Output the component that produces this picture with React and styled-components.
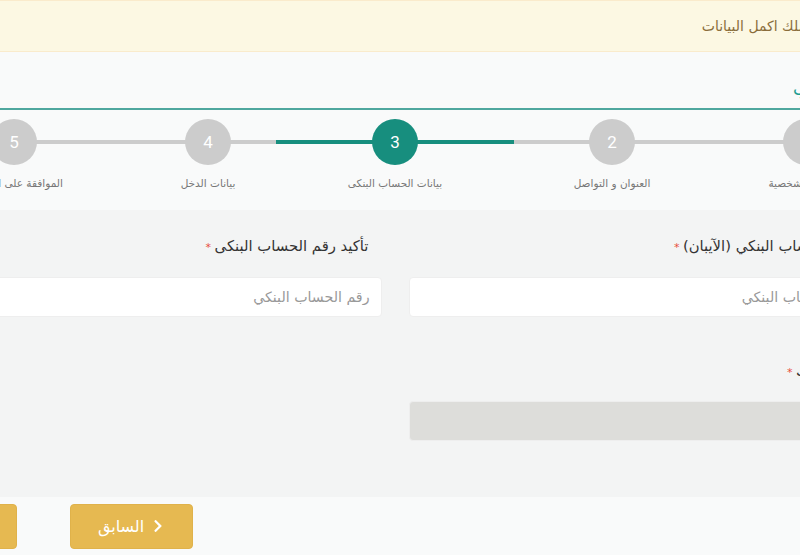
import React from 'react';
import styled, { createGlobalStyle } from 'styled-components';
import { FaChevronRight } from 'react-icons/fa';

const GlobalStyle = createGlobalStyle`
  html, body {
    margin: 0;
    padding: 0;
  }
  body {
    background: #f9fafa;
    font-family: "DejaVu Sans", "Noto Sans", sans-serif;
    overflow: hidden;
  }
  * {
    box-sizing: border-box;
  }
`;

// Окно просмотра
const Viewport = styled.div`
  width: 800px;
  height: 555px;
  overflow: hidden;
  background: #f9fafa;
`;

// Страница шире окна, центрирована около x=395
const Frame = styled.div`
  direction: rtl;
  width: 970px;
  margin-left: -90px;
`;

const Alert = styled.div`
  height: 52px;
  display: flex;
  align-items: center;
  padding: 0 40px;
  background: #fcf8e3;
  border-top: 1px solid #faebcc;
  border-bottom: 1px solid #faebcc;
  color: #8a6d3b;
  font-size: 14px;
`;

const Head = styled.section`
  padding-top: 22px;
`;

const Title = styled.h2`
  margin: 0 -3px 0 0;
  padding: 0 0 4px;
  font-size: 17px;
  line-height: 30px;
  font-weight: 400;
  color: #1d9d91;
  border-bottom: 2px solid #4fa79e;
`;

const Stepper = styled.ol`
  display: flex;
  margin: 0 -22px;
  padding: 9px 0 19px;
  list-style: none;
`;

const Step = styled.li`
  position: relative;
  flex: none;
  display: flex;
  flex-direction: column;
  align-items: center;

  &::before {
    content: '';
    position: absolute;
    top: 21px;
    left: 0;
    right: 0;
    height: 4px;
    background: ${p => (p.$active ? '#178e7e' : '#cccccc')};
  }
`;

const Circle = styled.span`
  position: relative;
  width: 46px;
  height: 46px;
  border-radius: 50%;
  display: flex;
  align-items: center;
  justify-content: center;
  background: ${p => (p.$active ? '#178e7e' : '#cccccc')};
  color: #fff;
  font-family: Roboto, "Liberation Sans", sans-serif;
  font-size: 17px;
`;

const StepLabel = styled.span`
  margin-top: 10px;
  font-size: 10.5px;
  line-height: 16px;
  color: #777;
  white-space: nowrap;
`;

const FormArea = styled.section`
  background: #f3f4f4;
  height: 287px;
  padding: 26px 10px 0;
`;

const Grid = styled.div`
  display: grid;
  grid-template-columns: 1fr 1fr;
  column-gap: 27px;
  row-gap: 44px;
`;

const Field = styled.div`
  display: flex;
  flex-direction: column;
  gap: ${p => p.$gap || 19}px;
`;

const Label = styled.label`
  padding-right: 13px;
  font-size: 14.8px;
  line-height: 20px;
  color: #333;

  &::after {
    content: ' *';
    color: #e74c3c;
    font-size: 11px;
  }
`;

const Input = styled.input`
  height: 40px;
  padding: 0 11px;
  border: 1px solid #eeeeee;
  border-radius: 4px;
  background: ${p => (p.disabled ? '#ddddda' : '#ffffff')};
  font-family: inherit;
  font-size: 14.2px;
  direction: rtl;
  outline: none;

  &::placeholder {
    color: #999;
  }
`;

const Footer = styled.div`
  height: 58px;
  display: flex;
  justify-content: flex-end;
  align-items: center;
  gap: 53px;
  padding-left: 7px;
`;

const Button = styled.button`
  width: ${p => p.$w}px;
  height: 45px;
  display: flex;
  align-items: center;
  justify-content: center;
  gap: 7px;
  border: 1px solid #e0b24a;
  border-radius: 4px;
  background: #e6b951;
  color: #fff;
  font-family: inherit;
  font-size: 16px;
  font-weight: 400;
`;

const steps = [
  { n: 1, label: 'البيانات الشخصية', w: 192 },
  { n: 2, label: 'العنوان و التواصل', w: 196 },
  { n: 3, label: 'بيانات الحساب البنكى', w: 238, active: true },
  { n: 4, label: 'بيانات الدخل', w: 136 },
  { n: 5, label: 'الموافقة على الشروط', w: 252 },
];

export default function App() {
  return (
    <Viewport>
      <GlobalStyle />
      <Frame>
        <Alert>من فضلك اكمل البيانات</Alert>
        <Head>
          <Title>إنشاء حساب</Title>
          <Stepper>
            {steps.map(s => (
              <Step key={s.n} $active={s.active} style={{ width: s.w }}>
                <Circle $active={s.active}>{s.n}</Circle>
                <StepLabel>{s.label}</StepLabel>
              </Step>
            ))}
          </Stepper>
        </Head>
        <FormArea>
          <Grid>
            <Field>
              <Label>رقم الحساب البنكي (الآيبان)</Label>
              <Input placeholder="رقم الحساب البنكي" />
            </Field>
            <Field>
              <Label>تأكيد رقم الحساب البنكى</Label>
              <Input placeholder="رقم الحساب البنكي" />
            </Field>
            <Field $gap={18}>
              <Label>اسم البنك</Label>
              <Input disabled />
            </Field>
          </Grid>
        </FormArea>
        <Footer>
          <Button $w={123}>
            <FaChevronRight size={14} />
            السابق
          </Button>
          <Button $w={100}>التالي</Button>
        </Footer>
      </Frame>
    </Viewport>
  );
}
